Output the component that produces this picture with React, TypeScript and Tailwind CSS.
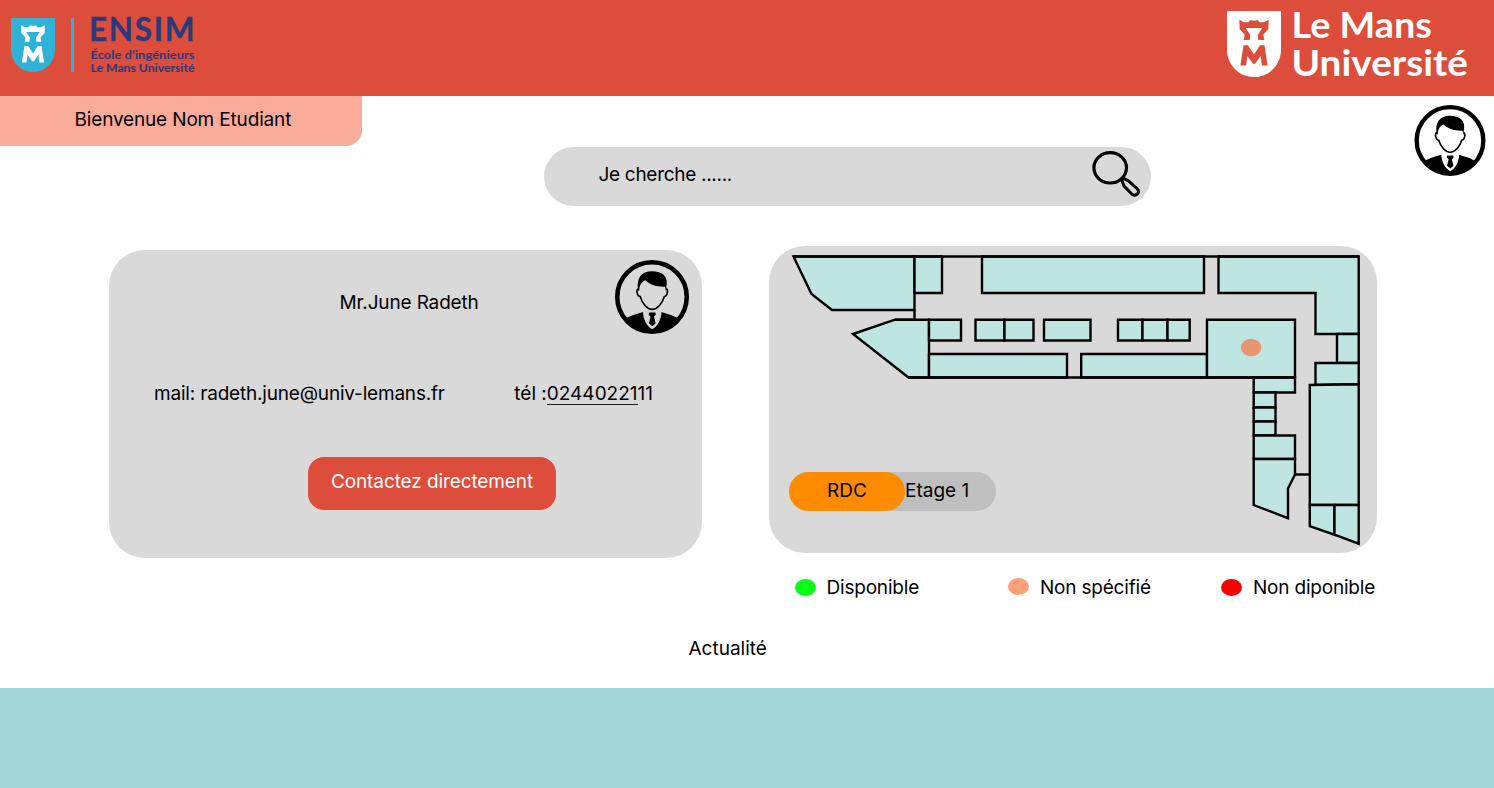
import React from "react";

function Shield({ body, mark, className }: { body: string; mark: string; className: string }) {
  return (
    <svg viewBox="0 0 54 66" preserveAspectRatio="none" className={className} aria-hidden="true">
      <path d="M0 0H54V38.500C54 54 42 66 27 66S0 54 0 38.500Z" fill={body} />
      <path
        d="M12.300 8.700L17 11.200H21.500L23.500 8.900L27 9.800L30.500 8.900L32.500 11.200H37L41.700 8.700L41.300 18.300L36.300 23.500L37.300 29H31.300L30.700 24L35.300 17H18.700L23.300 24L22.700 29H16.700L17.700 23.500L12.700 18.300Z"
        fill={mark}
      />
      <path
        d="M16.500 34.200H21L27 43.500L33 34.200H37.500L40.600 54.500H34.900L33.700 45L28 52.800H26L20.300 45L19.100 54.500H13.400Z"
        fill={mark}
      />
    </svg>
  );
}

function EnsimLogo() {
  return (
    <div className="flex pt-[18px] pl-[11px]">
      <Shield body="#30b2d8" mark="#ffffff" className="h-[54px] w-[44px]" />
      <div className="ml-[16px] h-[54px] w-[3px] bg-[#30b2d8]" />
      <svg width="120" height="62" className="-mt-1 ml-[12px] overflow-visible" fill="#293b7d" fontFamily="Lato, 'Open Sans', sans-serif" fontWeight="700">
        <text x="3" y="27" fontSize="31.500" stroke="#293b7d" strokeWidth="0.300" textLength="105.500" lengthAdjust="spacing">ENSIM</text>
        <text x="4.500" y="45" fontSize="12" textLength="104" lengthAdjust="spacingAndGlyphs">École d’ingénieurs</text>
        <text x="4.500" y="58" fontSize="12" textLength="104" lengthAdjust="spacingAndGlyphs">Le Mans Université</text>
      </svg>
    </div>
  );
}

function UniversityLogo() {
  return (
    <div className="flex pt-[11px] pr-[20px]">
      <Shield body="#ffffff" mark="#dc4d3b" className="h-[66px] w-[54px]" />
      <svg width="182" height="80" className="ml-[11px] overflow-visible" fill="#ffffff" fontFamily="Lato, 'Open Sans', sans-serif" fontWeight="700">
        <text x="-0.500" y="26.500" fontSize="36" textLength="140.500" lengthAdjust="spacingAndGlyphs">Le Mans</text>
        <text x="-0.500" y="65" fontSize="36" textLength="176.500" lengthAdjust="spacingAndGlyphs">Université</text>
      </svg>
    </div>
  );
}

function Avatar({ className }: { className: string }) {
  return (
    <svg viewBox="0 0 72 72" className={className} role="img" aria-label="Profil">
      <circle cx="36" cy="36" r="33.800" fill="none" stroke="#000" strokeWidth="4.400" />
      <path d="M10 57Q17 53 27.500 50.500L36.200 67L45 50.500Q55 53 62 57C56 66 46 70.500 36 70.500S16 66 10 57Z" fill="#000" />
      <path d="M27.200 50.500C27.500 58 31 64.500 36.200 67.300C41.500 64.500 45 58 45.200 50.500Z" className="fill-[var(--avatar)]" />
      <path d="M33.200 51.200H39.200L39.700 53L37.900 55.200L39.500 61.500L36.300 64.500L33 61.500L34.600 55.200L32.700 53Z" fill="#000" />
      <path
        d="M22.900 28Q20.700 28.500 21.500 32Q22.200 35.500 24.600 35.700C26.500 42 31 48 36.200 48S46 42 47.900 35.700Q50.300 35.200 50.900 32Q51.600 28.500 49.500 28"
        fill="none"
        stroke="#000"
        strokeWidth="1.600"
      />
      <path d="M22.500 30C20.500 17.500 25.500 11 36 11C46 11 51.300 16 50.300 23.500L49.500 30L48.700 26C40 26.300 33.500 23.500 29.300 19.700C25.500 21.500 23.800 24.500 23.600 30Z" fill="#000" />
    </svg>
  );
}

function SearchIcon() {
  return (
    <svg width="50" height="48" viewBox="0 0 50 48" fill="none" stroke="#000" aria-hidden="true">
      <ellipse cx="19.200" cy="16.800" rx="16.300" ry="15.200" strokeWidth="3.200" />
      <path d="M30.200 27.800L33 27.600L37.500 29.800L46 37.500C49.500 41 45.500 46 41 43.200L33 35Z" strokeWidth="3" strokeLinejoin="round" />
    </svg>
  );
}

const rooms = [
  "793.5,256.5 914.5,256.5 914.5,310 832,310 811.5,294",
  "914.5,256.5 942,256.5 942,293 914.5,293",
  "982,256.5 1204,256.5 1204,293 982,293",
  "1218.5,256.5 1358.700,256.5 1358.700,334 1315.5,334 1315.5,293 1218.5,293",
  "853,334 895,319.700 929,319.700 929,377.5 908.5,377.5",
  "929,319.700 961,319.700 961,340.5 929,340.5",
  "975.5,319.700 1004.5,319.700 1004.5,340.5 975.5,340.5",
  "1004.5,319.700 1033.5,319.700 1033.5,340.5 1004.5,340.5",
  "1044,319.700 1090.5,319.700 1090.5,340.5 1044,340.5",
  "1118,319.700 1142.5,319.700 1142.5,340.5 1118,340.5",
  "1142.5,319.700 1167.5,319.700 1167.5,340.5 1142.5,340.5",
  "1167.5,319.700 1189.700,319.700 1189.700,340.5 1167.5,340.5",
  "929,354 1067,354 1067,377.5 929,377.5",
  "1081.200,354 1207,354 1207,377.5 1081.200,377.5",
  "1207,319.700 1295,319.700 1295,377.5 1207,377.5",
  "1253.700,377.5 1295,377.5 1295,392.5 1253.700,392.5",
  "1253.700,392.5 1275.5,392.5 1275.5,407.5 1253.700,407.5",
  "1253.700,407.5 1275.5,407.5 1275.5,421.5 1253.700,421.5",
  "1253.700,421.5 1275.5,421.5 1275.5,435.5 1253.700,435.5",
  "1253.700,435.5 1295,435.5 1295,459 1253.700,459",
  "1253.700,459 1295,459 1295,474.5 1288,488.5 1288,518.200 1253.700,505",
  "1337,334 1358.700,334 1358.700,363 1337,363",
  "1315.5,363 1358.700,363 1358.700,384.200 1315.5,385",
  "1309.800,385 1358.700,384.200 1358.700,505 1309.800,505",
  "1309.800,505 1334.5,505 1334.5,534.700 1309.800,526.200",
  "1334.5,505 1358.700,505 1358.700,543.700 1334.5,534.700",
];

function FloorPlan() {
  return (
    <svg viewBox="769 246 608 307" className="absolute inset-0 h-full w-full" stroke="#000" strokeWidth="2.400" role="img" aria-label="Plan du bâtiment">
      {rooms.map((points) => (
        <polygon key={points} points={points} fill="#bfe5e3" />
      ))}
      <path d="M793.500 256.500H1358.700M914.500 310V319.700H895M908.500 377.500H1295M1295 474.500H1309.800" fill="none" />
      <ellipse cx="1251.100" cy="347.500" rx="10.300" ry="8.700" fill="#e9956f" stroke="none" />
    </svg>
  );
}

export default function App() {
  return (
    <div className="flex h-[788px] w-[1494px] flex-col overflow-hidden bg-white font-['Inter',sans-serif] text-[19px] leading-6 text-black">
      <header className="flex h-24 shrink-0 justify-between bg-[#dc4d3b]">
        <EnsimLogo />
        <UniversityLogo />
      </header>

      <section className="flex h-[111px] shrink-0">
        <div className="h-[50px] w-[362px] rounded-br-[16px] bg-[#faab99] pt-[12px] pl-[74.500px] tracking-[-0.16px] whitespace-nowrap">
          Bienvenue Nom Etudiant
        </div>
        <div className="mt-[51px] ml-[181.500px] flex h-[59px] w-[607.500px] justify-between rounded-[30px] bg-[#d9d9d9] pt-[4px] pr-[10px] pl-[55px]">
          <span className="pt-[12px] tracking-[-0.3px]">Je cherche ......</span>
          <SearchIcon />
        </div>
        <Avatar className="mt-[9px] mr-[8px] ml-auto h-[71px] w-[72px] [--avatar:#fff]" />
      </section>

      <main className="flex h-[481px] shrink-0 flex-col">
        <div className="flex h-[352px] items-start">
          <article className="mt-[43px] ml-[109px] flex h-[308px] w-[593px] flex-col rounded-[36px] bg-[#d9d9d9]">
            <div className="flex h-[120px]">
              <h1 className="w-[506px] pt-[41px] pl-[230.500px] tracking-[-0.15px] whitespace-nowrap">Mr.June Radeth</h1>
              <Avatar className="mt-[10px] h-[74px] w-[74px] [--avatar:#d9d9d9]" />
            </div>
            <div className="flex justify-between pt-[11.500px] pr-[49px] pl-[45px] whitespace-nowrap">
              <span className="tracking-[-0.19px]">mail: radeth.june@univ-lemans.fr</span>
              <span className="flex">
                tél :<span className="h-[23.500px] border-b-[1.500px] border-[#222]">02440221</span>11
              </span>
            </div>
            <button className="mt-[51.500px] ml-[199px] h-[53px] w-[248px] rounded-[16px] bg-[#dc4d3b] pb-[3px] tracking-[-0.1px] whitespace-nowrap text-white">
              Contactez directement
            </button>
          </article>

          <article className="relative mt-[39px] ml-[67px] h-[307px] w-[608px] rounded-[36px] bg-[#d9d9d9] pt-[226px] pl-[20px]">
            <FloorPlan />
            <div className="relative flex h-[38.500px] w-[207px] items-center rounded-full bg-[#bfbfbf] whitespace-nowrap">
              <span className="flex h-full w-[116px] items-center justify-center rounded-full bg-[#ff8b00]">RDC</span>
              <span>Etage 1</span>
            </div>
          </article>
        </div>

        <div className="flex h-[78px] items-start pt-[17px] pl-[795px] tracking-[-0.2px] whitespace-nowrap">
          <span className="mt-[3px] mr-[10.500px] h-[17px] w-[21px] rounded-[50%] bg-[#05ff16]" />
          <span className="w-[181.500px]">Disponible</span>
          <span className="mt-[2px] mr-[11px] h-[17px] w-[21px] rounded-[50%] bg-[#ffa078]" />
          <span className="w-[180.500px]">Non spécifié</span>
          <span className="mt-[3px] mr-[11.500px] h-[17px] w-[21px] rounded-[50%] bg-[#ff0000]" />
          <span>Non diponible</span>
        </div>

        <h2 className="pl-[688.500px]">Actualité</h2>
      </main>

      <footer className="h-[100px] shrink-0 bg-[#a5d7da]" />
    </div>
  );
}
